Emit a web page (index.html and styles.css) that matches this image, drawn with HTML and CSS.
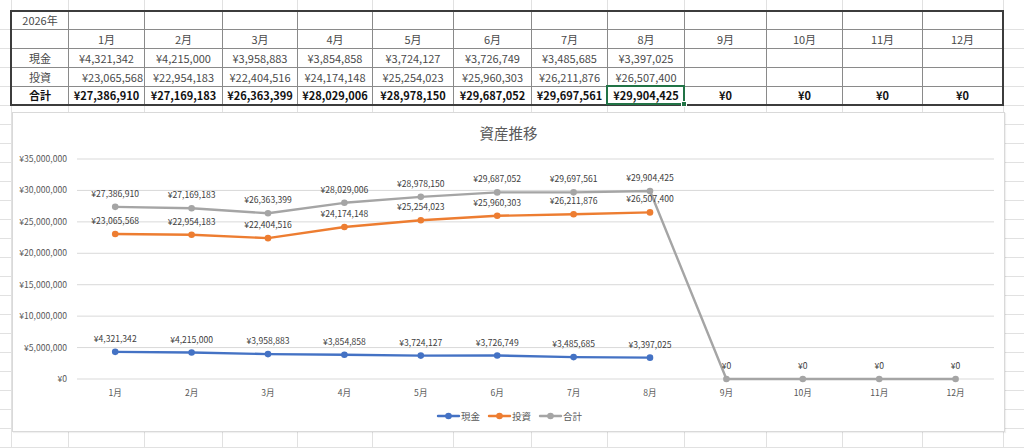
FILE: index.html
```html
<!DOCTYPE html>
<html lang="ja">
<head>
<meta charset="utf-8">
<title>資産推移</title>
<link rel="stylesheet" href="styles.css">
</head>
<body>
<div class="sheet">
  <div class="grid">
    <div class="c">2026年</div><div class="c"></div><div class="c"></div><div class="c"></div><div class="c"></div><div class="c"></div><div class="c"></div><div class="c"></div><div class="c"></div><div class="c"></div><div class="c"></div><div class="c"></div><div class="c"></div>
    <div class="c"></div><div class="c">1月</div><div class="c">2月</div><div class="c">3月</div><div class="c">4月</div><div class="c">5月</div><div class="c">6月</div><div class="c">7月</div><div class="c">8月</div><div class="c">9月</div><div class="c">10月</div><div class="c">11月</div><div class="c">12月</div>
    <div class="c">現金</div><div class="c">¥4,321,342</div><div class="c">¥4,215,000</div><div class="c">¥3,958,883</div><div class="c">¥3,854,858</div><div class="c">¥3,724,127</div><div class="c">¥3,726,749</div><div class="c">¥3,485,685</div><div class="c">¥3,397,025</div><div class="c"></div><div class="c"></div><div class="c"></div><div class="c"></div>
    <div class="c">投資</div><div class="c r">¥23,065,568</div><div class="c">¥22,954,183</div><div class="c">¥22,404,516</div><div class="c">¥24,174,148</div><div class="c">¥25,254,023</div><div class="c">¥25,960,303</div><div class="c">¥26,211,876</div><div class="c">¥26,507,400</div><div class="c"></div><div class="c"></div><div class="c"></div><div class="c"></div>
    <div class="c b">合計</div><div class="c b">¥27,386,910</div><div class="c b">¥27,169,183</div><div class="c b">¥26,363,399</div><div class="c b">¥28,029,006</div><div class="c b">¥28,978,150</div><div class="c b">¥29,687,052</div><div class="c b">¥29,697,561</div><div class="c b sel">¥29,904,425<span class="selbox"></span><span class="handle"></span></div><div class="c b">¥0</div><div class="c b">¥0</div><div class="c b">¥0</div><div class="c b">¥0</div>
  </div>

  <div class="chart">
    <svg class="plot" width="993" height="320" viewBox="12 112 993 320" xmlns="http://www.w3.org/2000/svg">
      <text class="title" x="508.5" y="139" text-anchor="middle">資産推移</text>

      <g class="gridlines">
        <line x1="77" x2="994" y1="159" y2="159"/>
        <line x1="77" x2="994" y1="190.43" y2="190.43"/>
        <line x1="77" x2="994" y1="221.86" y2="221.86"/>
        <line x1="77" x2="994" y1="253.29" y2="253.29"/>
        <line x1="77" x2="994" y1="284.71" y2="284.71"/>
        <line x1="77" x2="994" y1="316.14" y2="316.14"/>
        <line x1="77" x2="994" y1="347.57" y2="347.57"/>
        <line x1="77" x2="994" y1="379" y2="379"/>
      </g>

      <g class="ylabels" text-anchor="end">
        <text x="67" y="162">¥35,000,000</text>
        <text x="67" y="193.4">¥30,000,000</text>
        <text x="67" y="224.9">¥25,000,000</text>
        <text x="67" y="256.3">¥20,000,000</text>
        <text x="67" y="287.7">¥15,000,000</text>
        <text x="67" y="319.1">¥10,000,000</text>
        <text x="67" y="350.6">¥5,000,000</text>
        <text x="67" y="382">¥0</text>
      </g>

      <g class="xlabels" text-anchor="middle">
        <text x="115.2" y="396">1月</text>
        <text x="191.6" y="396">2月</text>
        <text x="268" y="396">3月</text>
        <text x="344.4" y="396">4月</text>
        <text x="420.8" y="396">5月</text>
        <text x="497.2" y="396">6月</text>
        <text x="573.6" y="396">7月</text>
        <text x="650" y="396">8月</text>
        <text x="726.4" y="396">9月</text>
        <text x="802.8" y="396">10月</text>
        <text x="879.2" y="396">11月</text>
        <text x="955.6" y="396">12月</text>
      </g>

      <g class="series total">
        <polyline points="115.2,206.85 191.6,208.22 268,213.29 344.4,202.82 420.8,196.85 497.2,192.39 573.6,192.33 650,191.03 726.4,379 802.8,379 879.2,379 955.6,379"/>
        <circle cx="115.2" cy="206.85" r="3.3"/><circle cx="191.6" cy="208.22" r="3.3"/><circle cx="268" cy="213.29" r="3.3"/><circle cx="344.4" cy="202.82" r="3.3"/><circle cx="420.8" cy="196.85" r="3.3"/><circle cx="497.2" cy="192.39" r="3.3"/><circle cx="573.6" cy="192.33" r="3.3"/><circle cx="650" cy="191.03" r="3.3"/><circle cx="726.4" cy="379" r="3.3"/><circle cx="802.8" cy="379" r="3.3"/><circle cx="879.2" cy="379" r="3.3"/><circle cx="955.6" cy="379" r="3.3"/>
      </g>
      <g class="series invest">
        <polyline points="115.2,234.02 191.6,234.72 268,238.17 344.4,227.05 420.8,220.26 497.2,215.82 573.6,214.24 650,212.38"/>
        <circle cx="115.2" cy="234.02" r="3.3"/><circle cx="191.6" cy="234.72" r="3.3"/><circle cx="268" cy="238.17" r="3.3"/><circle cx="344.4" cy="227.05" r="3.3"/><circle cx="420.8" cy="220.26" r="3.3"/><circle cx="497.2" cy="215.82" r="3.3"/><circle cx="573.6" cy="214.24" r="3.3"/><circle cx="650" cy="212.38" r="3.3"/>
      </g>
      <g class="series cash">
        <polyline points="115.2,351.84 191.6,352.51 268,354.12 344.4,354.77 420.8,355.59 497.2,355.57 573.6,357.09 650,357.65"/>
        <circle cx="115.2" cy="351.84" r="3.3"/><circle cx="191.6" cy="352.51" r="3.3"/><circle cx="268" cy="354.12" r="3.3"/><circle cx="344.4" cy="354.77" r="3.3"/><circle cx="420.8" cy="355.59" r="3.3"/><circle cx="497.2" cy="355.57" r="3.3"/><circle cx="573.6" cy="357.09" r="3.3"/><circle cx="650" cy="357.65" r="3.3"/>
      </g>

      <g class="dlabels" text-anchor="middle">
        <text x="115.2" y="196.9">¥27,386,910</text>
        <text x="191.6" y="198.2">¥27,169,183</text>
        <text x="268" y="203.3">¥26,363,399</text>
        <text x="344.4" y="192.8">¥28,029,006</text>
        <text x="420.8" y="186.9">¥28,978,150</text>
        <text x="497.2" y="182.4">¥29,687,052</text>
        <text x="573.6" y="182.3">¥29,697,561</text>
        <text x="650" y="181">¥29,904,425</text>
        <text x="726.4" y="369">¥0</text>
        <text x="802.8" y="369">¥0</text>
        <text x="879.2" y="369">¥0</text>
        <text x="955.6" y="369">¥0</text>

        <text x="115.2" y="224">¥23,065,568</text>
        <text x="191.6" y="224.7">¥22,954,183</text>
        <text x="268" y="228.2">¥22,404,516</text>
        <text x="344.4" y="217">¥24,174,148</text>
        <text x="420.8" y="210.3">¥25,254,023</text>
        <text x="497.2" y="205.8">¥25,960,303</text>
        <text x="573.6" y="204.2">¥26,211,876</text>
        <text x="650" y="202.4">¥26,507,400</text>

        <text x="115.2" y="341.8">¥4,321,342</text>
        <text x="191.6" y="342.5">¥4,215,000</text>
        <text x="268" y="344.1">¥3,958,883</text>
        <text x="344.4" y="344.8">¥3,854,858</text>
        <text x="420.8" y="345.6">¥3,724,127</text>
        <text x="497.2" y="345.6">¥3,726,749</text>
        <text x="573.6" y="347.1">¥3,485,685</text>
        <text x="650" y="347.6">¥3,397,025</text>
      </g>

      <g class="legend">
        <g class="series cash"><line x1="438" x2="459" y1="416" y2="416"/><circle cx="448.5" cy="416" r="3.3"/></g>
        <text x="461" y="419.5">現金</text>
        <g class="series invest"><line x1="489" x2="510" y1="416" y2="416"/><circle cx="499.5" cy="416" r="3.3"/></g>
        <text x="512" y="419.5">投資</text>
        <g class="series total"><line x1="540" x2="561" y1="416" y2="416"/><circle cx="550.5" cy="416" r="3.3"/></g>
        <text x="563" y="419.5">合計</text>
      </g>
    </svg>
  </div>
</div>
</body>
</html>
```

FILE: styles.css
```css
html, body {
  margin: 0;
  padding: 0;
  background: #ffffff;
}

.sheet {
  width: 1024px;
  height: 448px;
  overflow: hidden;
  box-sizing: border-box;
  padding: 10px 0 0 10px;
  font-family: "Noto Sans CJK JP", "Noto Sans", sans-serif;
  background-color: #ffffff;
  background-image:
    linear-gradient(to right,
      transparent 0 11px, #e1e1e1 11px 12px,
      transparent 12px 68px, #e1e1e1 68px 69px,
      transparent 69px 144px, #e1e1e1 144px 145px,
      transparent 145px 222px, #e1e1e1 222px 223px,
      transparent 223px 297px, #e1e1e1 297px 298px,
      transparent 298px 372px, #e1e1e1 372px 373px,
      transparent 373px 453px, #e1e1e1 453px 454px,
      transparent 454px 531px, #e1e1e1 531px 532px,
      transparent 532px 607px, #e1e1e1 607px 608px,
      transparent 608px 684px, #e1e1e1 684px 685px,
      transparent 685px 766px, #e1e1e1 766px 767px,
      transparent 767px 842px, #e1e1e1 842px 843px,
      transparent 843px 922px, #e1e1e1 922px 923px,
      transparent 923px 1003px, #e1e1e1 1003px 1004px,
      transparent 1004px),
    repeating-linear-gradient(to bottom, transparent 0 18px, #e1e1e1 18px 19px);
  background-position: 0 0, 0 11px;
}

.grid {
  display: grid;
  width: 994px;
  box-sizing: border-box;
  border: 2px solid #3c3c3c;
  background: #ffffff;
  grid-template-columns: 57px 76px 78px 75px 75px 81px 78px 76px 77px 82px 76px 80px 79px;
  grid-template-rows: 18px 19px 19px 19px 17px;
}

.c {
  box-sizing: border-box;
  border-right: 1px solid #8a8a8a;
  border-bottom: 1px solid #8a8a8a;
  display: flex;
  align-items: center;
  justify-content: center;
  font-size: 11px;
  line-height: 1;
  color: #4a4a4a;
  white-space: nowrap;
  position: relative;
}

.c:nth-child(13n) {
  border-right: none;
}

.c:nth-child(n+53) {
  border-bottom: none;
}

.c.r {
  justify-content: flex-end;
  padding-right: 1px;
}

.c.b {
  font-weight: 700;
  color: #111111;
}

.selbox {
  position: absolute;
  top: -2px;
  left: -2px;
  right: -1px;
  bottom: -1px;
  border: 2px solid #217346;
  pointer-events: none;
}

.handle {
  position: absolute;
  right: -3px;
  bottom: -3px;
  width: 4px;
  height: 4px;
  background: #217346;
  border: 1px solid #ffffff;
}

.chart {
  margin: 6px 0 0 2px;
  width: 993px;
  height: 320px;
  box-sizing: border-box;
  border: 1px solid #d9d9d9;
  background: #ffffff;
  box-shadow: 1px 1px 1px rgba(0, 0, 0, 0.06);
  overflow: hidden;
}

.plot {
  display: block;
  margin: -1px 0 0 -1px;
  font-family: "Noto Sans CJK JP", "Noto Sans", sans-serif;
}

.title {
  font-size: 14.5px;
  fill: #595959;
}

.gridlines line {
  stroke: #d9d9d9;
  stroke-width: 1;
}

.ylabels text,
.xlabels text {
  font-size: 8.6px;
  fill: #595959;
}

.dlabels text {
  font-size: 8.6px;
  fill: #404040;
}

.legend text {
  font-size: 9.5px;
  fill: #595959;
}

.series polyline,
.series line {
  fill: none;
  stroke-width: 2.4;
  stroke-linejoin: round;
  stroke-linecap: round;
}

.cash polyline, .cash line { stroke: #4472c4; }
.cash circle { fill: #4472c4; }
.invest polyline, .invest line { stroke: #ed7d31; }
.invest circle { fill: #ed7d31; }
.total polyline, .total line { stroke: #a5a5a5; }
.total circle { fill: #a5a5a5; }
```
